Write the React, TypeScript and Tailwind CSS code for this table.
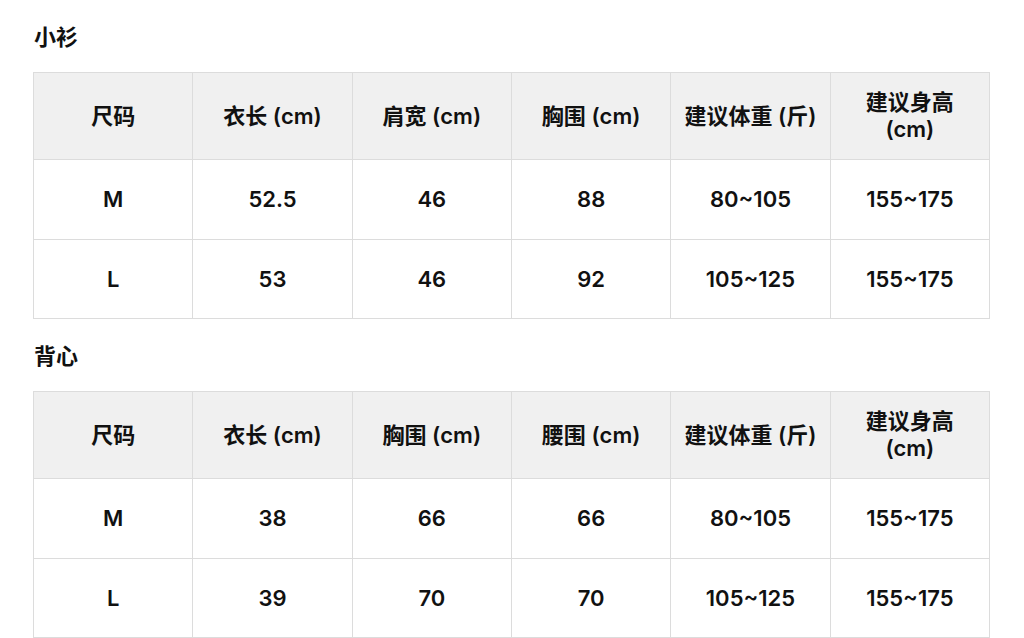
import React from "react";

type Table = { title: string; headers: string[][]; rows: string[][] };

const tables: Table[] = [
  {
    title: "小衫",
    headers: [["尺码"], ["衣长 (cm)"], ["肩宽 (cm)"], ["胸围 (cm)"], ["建议体重 (斤)"], ["建议身高", "(cm)"]],
    rows: [
      ["M", "52.5", "46", "88", "80~105", "155~175"],
      ["L", "53", "46", "92", "105~125", "155~175"],
    ],
  },
  {
    title: "背心",
    headers: [["尺码"], ["衣长 (cm)"], ["胸围 (cm)"], ["腰围 (cm)"], ["建议体重 (斤)"], ["建议身高", "(cm)"]],
    rows: [
      ["M", "38", "66", "66", "80~105", "155~175"],
      ["L", "39", "70", "70", "105~125", "155~175"],
    ],
  },
];

function SizeTable({ table }: { table: Table }) {
  return (
    <section className="pt-[22px]">
      <h2 className="mb-[20px] pl-[1px] text-[22px] font-semibold leading-[30px] text-[#111]">{table.title}</h2>
      <table className="w-[957px] table-fixed border-collapse text-center text-[22px] font-semibold text-[#111]">
        <thead>
          <tr className="h-[87px] bg-[#f0f0f0]">
            {table.headers.map((lines, i) => (
              <th key={i} className="border border-[#dcdcdc] px-2 font-semibold leading-[27px]">
                {lines.map((line, j) => (
                  <div key={j}>{line}</div>
                ))}
              </th>
            ))}
          </tr>
        </thead>
        <tbody>
          {table.rows.map((row, r) => (
            <tr key={r} className={r === 0 ? "h-[80px]" : "h-[79px]"}>
              {row.map((cell, c) => (
                <td key={c} className="border border-[#dcdcdc] px-2">{cell}</td>
              ))}
            </tr>
          ))}
        </tbody>
      </table>
    </section>
  );
}

export default function App() {
  return (
    <div className="h-[638px] overflow-hidden bg-white pl-[33px]" style={{ fontFamily: '"Inter", "Noto Sans CJK SC", sans-serif' }}>
      {tables.map((t) => (
        <SizeTable key={t.title} table={t} />
      ))}
    </div>
  );
}
